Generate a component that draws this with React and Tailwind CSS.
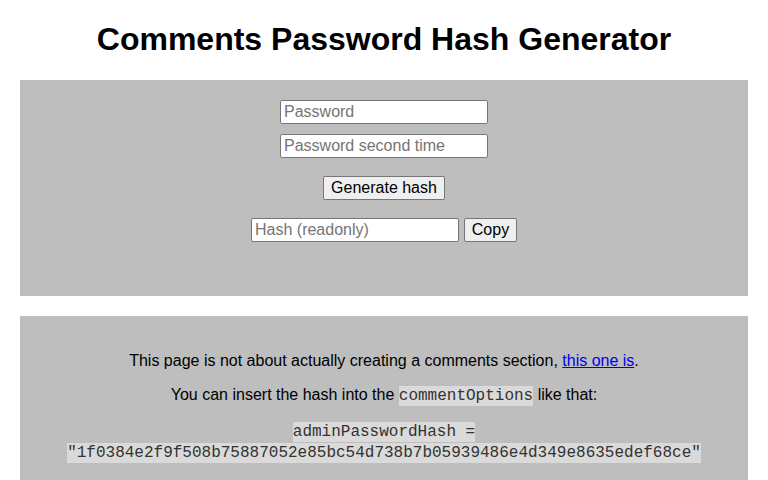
import React from "react";

const input =
    "w-[208px] h-[24px] border border-[#767676] rounded-[2px] bg-white px-[3px] text-[16px] text-black placeholder:text-[#757575] outline-none";
const button =
    "h-[24px] border border-[#767676] rounded-[2px] bg-[#efefef] text-[16px] text-black leading-none";
const code = "[font-family:'Liberation_Mono','Courier_New',monospace] text-[16px] text-[#333] bg-[#dadada] py-[1px]";

export default function App() {
    return (
        <main className="min-h-[480px] bg-white font-['Liberation_Sans',Arial,sans-serif] text-black">
            <h1 className="text-center text-[32px] font-bold leading-[37px] pt-[21px] pb-[22px]">
                Comments Password Hash Generator
            </h1>

            <section className="mx-[20px] bg-[#bebebe] pt-[20px] pb-[54px] flex flex-col items-center">
                <input className={input} type="password" placeholder="Password" />
                <input className={`${input} mt-[10px]`} type="password" placeholder="Password second time" />
                <button className={`${button} w-[122px] mt-[18px]`}>Generate hash</button>
                <div className="flex gap-[5px] mt-[18px]">
                    <input className={input} readOnly placeholder="Hash (readonly)" />
                    <button className={`${button} w-[53px]`}>Copy</button>
                </div>
            </section>

            <section className="mx-[20px] mt-[20px] bg-[#bebebe] pt-[20px] pb-[20px] text-center text-[16px]">
                <p className="my-[16px] leading-[18px]">
                    This page is not about actually creating a comments section,{" "}
                    <a href="#" className="text-[#0000ee] underline">this one is</a>.
                </p>
                <p className="my-[16px] leading-[18px]">
                    You can insert the hash into the <code className={code}>commentOptions</code> like that:
                </p>
                <p className="my-[16px] leading-[20px]">
                    <code className={code}>
                        adminPasswordHash = "1f0384e2f9f508b75887052e85bc54d738b7b05939486e4d349e8635edef68ce"
                    </code>
                </p>
            </section>
        </main>
    );
}
